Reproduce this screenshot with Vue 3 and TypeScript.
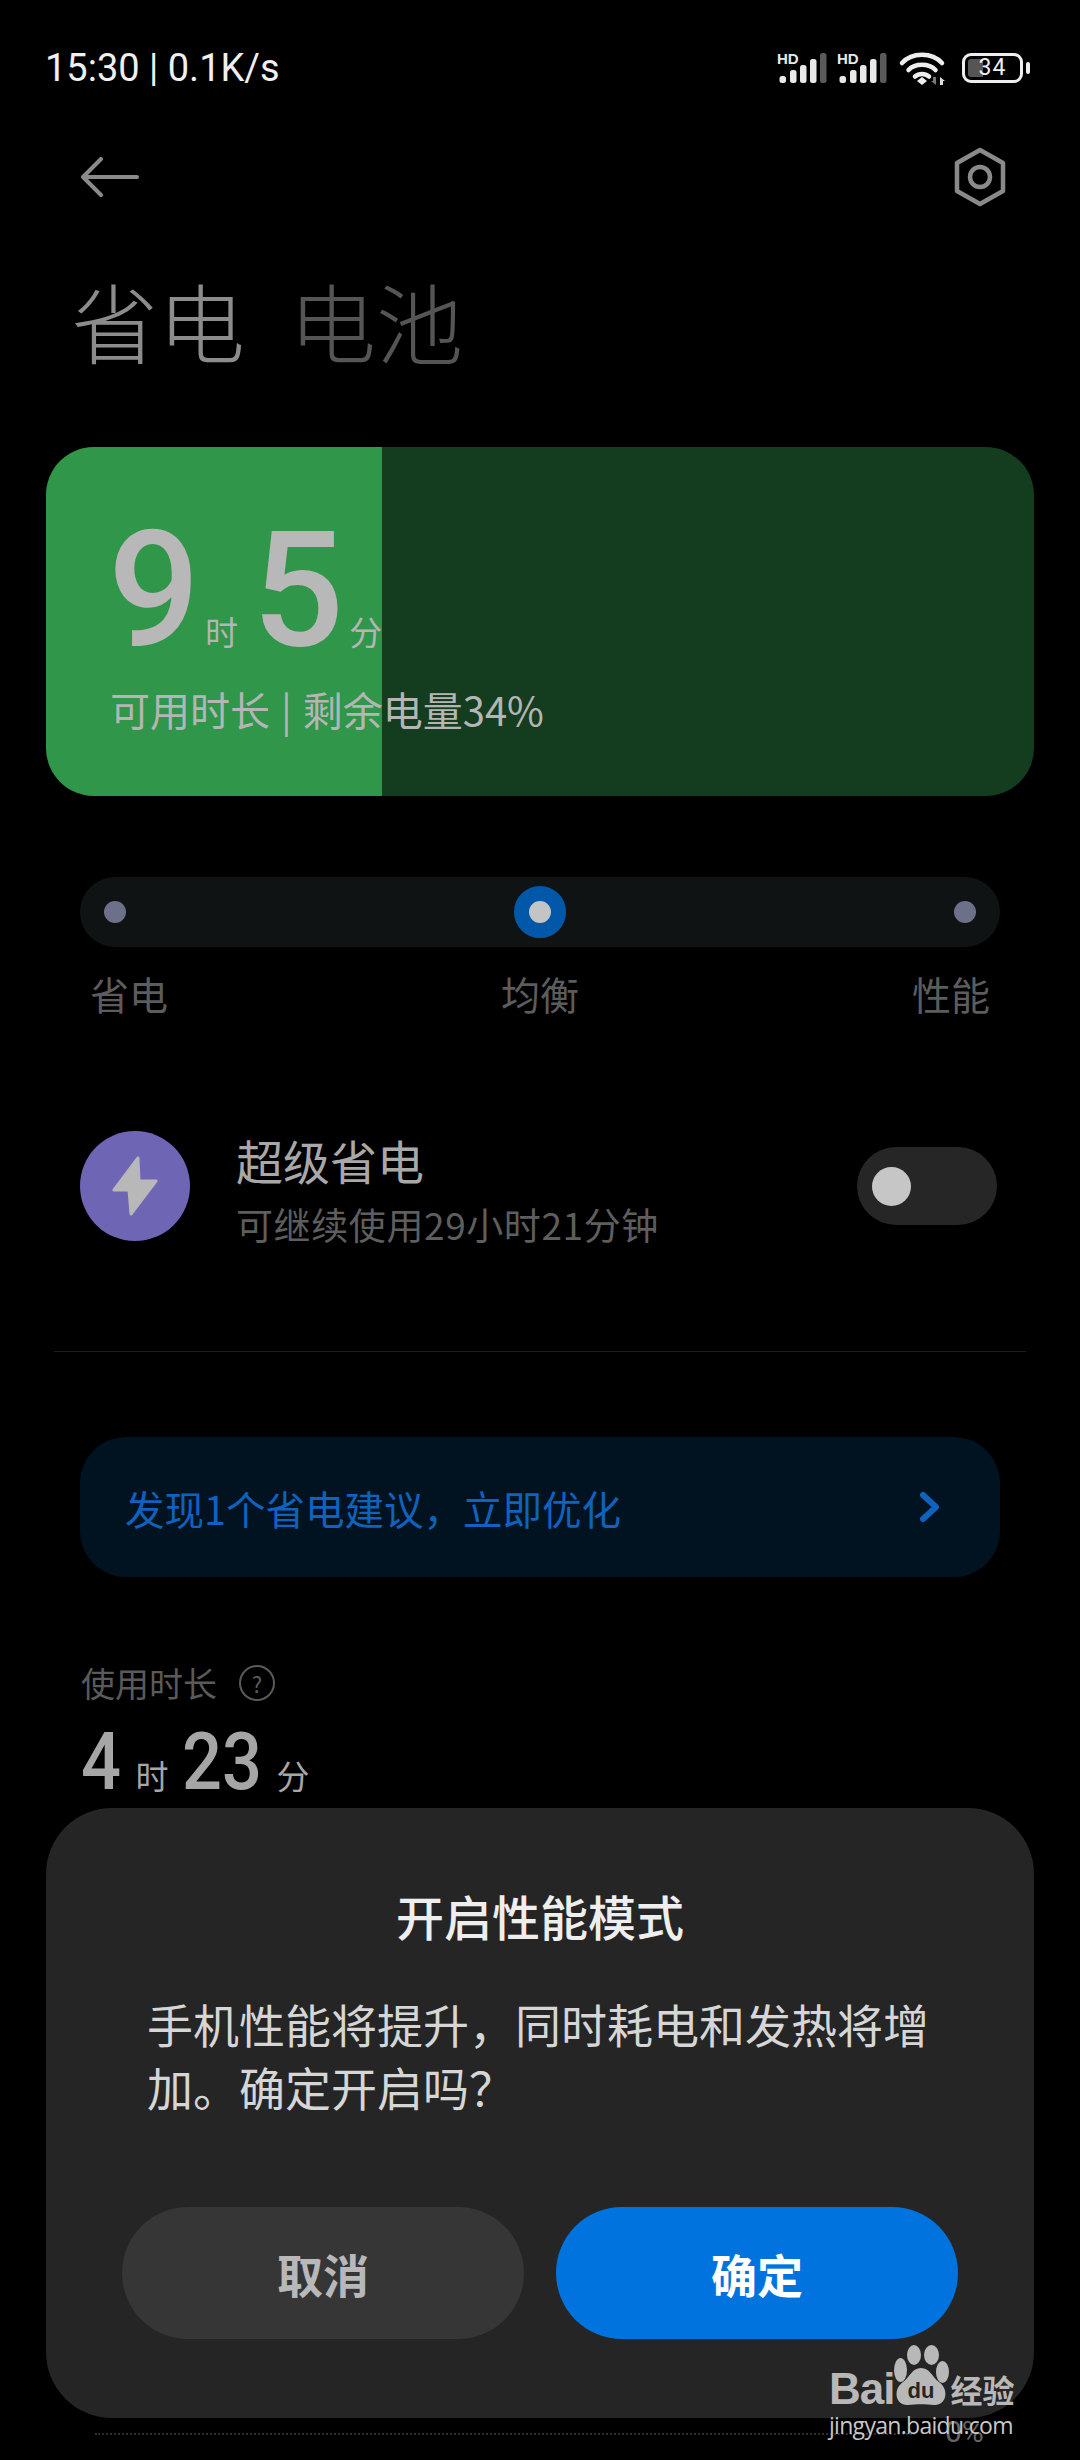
<script setup lang="ts">
interface ModeStop {
  label: string;
  active?: boolean;
}

const modes: ModeStop[] = [
  { label: '省电' },
  { label: '均衡', active: true },
  { label: '性能' }
];

const signalGroups = [0, 1];
const signalBars = [
  { x: 4.5, y: 26 },
  { x: 15, y: 20 },
  { x: 25, y: 15 },
  { x: 35, y: 9 }
];
</script>

<template>
  <div class="page">
    <div class="status-bar">
      <span class="status-text">15:30 | 0.1K/s</span>
      <div class="status-icons">
        <svg v-for="group in signalGroups" :key="group" class="signal" width="54" height="36" viewBox="0 0 54 36">
          <text x="2" y="14" class="hd">HD</text>
          <rect v-for="bar in signalBars" :key="bar.x" :x="bar.x" :y="bar.y" width="6.5" :height="33 - bar.y" rx="2.5" fill="#e8e8e8" />
          <rect x="45" y="3" width="6.5" height="30" rx="2.5" fill="#5a5a5a" />
        </svg>
        <svg class="wifi" width="50" height="36" viewBox="0 0 50 36" fill="none" stroke="#eee" stroke-width="4.5" stroke-linecap="round">
          <path d="M4 13C14 2 34 2 44 13" />
          <path d="M10.5 20C17 13 31 13 37.5 20" />
          <path d="M17 26.500C21 23 27 23 31 26.500" />
          <path d="M19 31L24 27L29 31L24 35Z" fill="#eee" stroke="none" />
          <path d="M35 27H38V35L33 31H35Z" fill="#777" stroke="none" />
          <path d="M42 27L47 31H45V35H42Z" fill="#ddd" stroke="none" />
        </svg>
        <div class="battery">
          <div class="battery-body">
            <span class="battery-fill"></span>
            <span class="battery-text">34</span>
          </div>
          <span class="battery-cap"></span>
        </div>
      </div>
    </div>

    <div class="nav-bar">
      <svg width="60" height="40" viewBox="0 0 60 40" fill="none" stroke="#8a8a8a" stroke-width="4" stroke-linecap="round" stroke-linejoin="round">
        <path d="M21 2L3 20L21 38" />
        <path d="M4 20H57" />
      </svg>
      <svg width="56" height="60" viewBox="0 0 56 60" fill="none" stroke="#8a8a8a" stroke-width="4.500" stroke-linejoin="round">
        <path d="M28 3L51 16V44L28 57L5 44V16Z" />
        <circle cx="28" cy="30" r="10" />
      </svg>
    </div>

    <div class="tabs">
      <span class="tab tab-active">省电</span>
      <span class="tab tab-muted">电池</span>
    </div>

    <section class="battery-card">
      <div class="battery-level"></div>
      <div class="card-content">
        <div class="remaining">
          <span class="big-num">9</span>
          <span class="big-unit">时</span>
          <span class="big-num big-num-second">5</span>
          <span class="big-unit">分</span>
        </div>
        <div class="remaining-label">可用时长 | 剩余电量34%</div>
      </div>
    </section>

    <section class="mode-picker">
      <div class="mode-track">
        <div v-for="mode in modes" :key="mode.label" class="mode-dot" :class="{ 'mode-dot-active': mode.active }"></div>
      </div>
      <div class="mode-labels">
        <span v-for="mode in modes" :key="mode.label">{{ mode.label }}</span>
      </div>
    </section>

    <section class="saver-row">
      <div class="saver-icon">
        <svg width="46" height="62" viewBox="0 0 46 62">
          <path d="M26 3L2 35H17L19 59L44 26H27Z" fill="#b8b8b8" stroke="#b8b8b8" stroke-width="3" stroke-linejoin="round" />
        </svg>
      </div>
      <div class="saver-text">
        <div class="saver-title">超级省电</div>
        <div class="saver-sub">可继续使用29小时21分钟</div>
      </div>
      <div class="switch"><span class="switch-knob"></span></div>
    </section>

    <div class="divider"></div>

    <div class="advice">
      <span>发现1个省电建议，立即优化</span>
      <svg width="22" height="32" viewBox="0 0 22 32" fill="none" stroke="#0f62bd" stroke-width="6" stroke-linecap="round" stroke-linejoin="round">
        <path d="M4 4L17 16L4 28" />
      </svg>
    </div>

    <section class="usage">
      <div class="usage-label">
        <span>使用时长</span>
        <span class="help">?</span>
      </div>
      <div class="usage-value">
        <span class="usage-num usage-num-one">4</span>
        <span class="usage-unit">时</span>
        <span class="usage-num usage-num-two">23</span>
        <span class="usage-unit">分</span>
      </div>
    </section>

    <!-- chart baseline that shows under the dialog -->
    <div class="chart-line"></div>
    <span class="chart-percent">0%</span>

    <div class="dialog">
      <h2 class="dialog-title">开启性能模式</h2>
      <p class="dialog-body">手机性能将提升，同时耗电和发热将增加。确定开启吗？</p>
      <div class="dialog-actions">
        <button class="btn btn-cancel" type="button">取消</button>
        <button class="btn btn-confirm" type="button">确定</button>
      </div>
    </div>

    <div class="watermark">
      <div class="wm-logo">
        <span class="wm-bai">Bai</span>
        <svg class="wm-paw" width="58" height="62" viewBox="0 0 58 62" fill="#b8b8b8">
          <ellipse cx="8.500" cy="26" rx="6.500" ry="12" />
          <ellipse cx="22" cy="11" rx="7" ry="10" />
          <ellipse cx="39.500" cy="11" rx="7.500" ry="10" />
          <ellipse cx="50.500" cy="28" rx="6.500" ry="11" />
          <path d="M29 24C38 24 40 33 47 38C58 46 54 62 42 61C34 60 24 60 16 61C4 62 0 46 11 38C18 33 20 24 29 24Z" />
          <text x="29" y="54" class="wm-du">du</text>
        </svg>
        <span class="wm-cn">经验</span>
      </div>
      <div class="wm-url">jingyan.baidu.com</div>
    </div>
  </div>
</template>

<style>
html,
body {
  margin: 0;
  background: #000;
}
</style>

<style scoped>
.page {
  position: relative;
  width: 1080px;
  height: 2460px;
  overflow: hidden;
  background: #000;
  font-family: "Noto Sans CJK SC", "Noto Sans", sans-serif;
  color: #b5b5b5;
}

/* Status bar */
.status-bar {
  display: flex;
  align-items: center;
  justify-content: space-between;
  height: 36px;
  padding: 50px 50px 0 45px;
}

.status-text {
  font-family: Roboto, "Noto Sans", sans-serif;
  font-size: 38px;
  font-weight: 400;
  color: #f0f0f0;
  white-space: nowrap;
}

.status-icons {
  display: flex;
  align-items: center;
  gap: 6px;
}

.signal {
  display: block;
}

.hd {
  font-family: "Liberation Sans", sans-serif;
  font-size: 15px;
  font-weight: 700;
  fill: #e8e8e8;
}

.wifi {
  margin: 0 8px 0 3px;
}

.battery {
  display: flex;
  align-items: center;
  gap: 3px;
}

.battery-body {
  position: relative;
  display: flex;
  align-items: center;
  justify-content: center;
  box-sizing: border-box;
  width: 61px;
  height: 30px;
  border: 3px solid #eee;
  border-radius: 9px;
}

.battery-fill {
  position: absolute;
  left: 3px;
  top: 3px;
  bottom: 3px;
  width: 15px;
  border-radius: 3px 0 0 3px;
  background: #555;
}

.battery-text {
  position: relative;
  font-family: Roboto, sans-serif;
  font-size: 23px;
  line-height: 24px;
  letter-spacing: 1px;
  color: #eee;
}

.battery-cap {
  width: 4px;
  height: 12px;
  border-radius: 2px;
  background: #eee;
}

/* Nav + title */
.nav-bar {
  display: flex;
  align-items: center;
  justify-content: space-between;
  height: 60px;
  padding: 61px 72px 0 80px;
}

.tabs {
  display: flex;
  gap: 44px;
  padding: 57px 0 0 71px;
  font-size: 87px;
  font-weight: 300;
  line-height: 112px;
}

.tab-active {
  color: #8c8c8c;
}

.tab-muted {
  color: #555;
}

/* Battery card */
.battery-card {
  position: relative;
  overflow: hidden;
  height: 349px;
  margin: 71px 46px 0;
  border-radius: 48px;
  background: #143c1e;
}

.battery-level {
  position: absolute;
  inset: 0 auto 0 0;
  width: 336px;
  background: #2f964a;
}

.card-content {
  position: relative;
  padding: 66px 0 0 62px;
}

.remaining {
  display: flex;
  align-items: baseline;
  height: 154px;
}

.big-num {
  font-family: Roboto, sans-serif;
  font-size: 162px;
  font-weight: 500;
  line-height: 154px;
  color: #b8b8b8;
}

.big-num-second {
  margin-left: 14px;
}

.big-unit {
  margin-left: 5px;
  font-size: 33px;
  color: #b5b5b5;
}

.remaining-label {
  margin: 16px 0 0 2px;
  font-size: 40px;
  line-height: 52px;
  word-spacing: 2px;
  color: #b5b5b5;
  white-space: nowrap;
}

/* Mode slider */
.mode-picker {
  margin: 81px 80px 0;
}

.mode-track {
  display: flex;
  align-items: center;
  justify-content: space-between;
  box-sizing: border-box;
  height: 70px;
  padding: 0 24px;
  border-radius: 35px;
  background: #101313;
}

.mode-dot {
  width: 22px;
  height: 22px;
  border-radius: 50%;
  background: #6d7089;
}

.mode-dot-active {
  box-sizing: border-box;
  width: 52px;
  height: 52px;
  border: 15px solid #0258a8;
  background: #c4c4c4;
}

.mode-labels {
  display: flex;
  justify-content: space-between;
  margin-top: 20px;
  padding: 0 10px;
  font-size: 39px;
  line-height: 52px;
  color: #5c5c5c;
}

/* Super saver row */
.saver-row {
  display: flex;
  align-items: center;
  margin: 105px 83px 0 80px;
}

.saver-icon {
  display: flex;
  align-items: center;
  justify-content: center;
  flex: none;
  width: 110px;
  height: 110px;
  border-radius: 50%;
  background: #6e66b4;
}

.saver-text {
  flex: 1;
  margin-left: 46px;
  padding-top: 6px;
}

.saver-title {
  font-size: 47px;
  line-height: 60px;
  color: #a8a8a8;
}

.saver-sub {
  margin-top: 10px;
  font-size: 37px;
  line-height: 48px;
  letter-spacing: 0.6px;
  color: #5e5e5e;
  white-space: nowrap;
}

.switch {
  display: flex;
  align-items: center;
  box-sizing: border-box;
  width: 140px;
  height: 78px;
  padding-left: 15px;
  border-radius: 39px;
  background: #262626;
}

.switch-knob {
  width: 39px;
  height: 39px;
  border-radius: 50%;
  background: #c6c6c6;
}

.divider {
  height: 1px;
  margin: 103px 54px 0;
  background: #1d1d1d;
}

/* Advice banner */
.advice {
  display: flex;
  align-items: center;
  justify-content: space-between;
  box-sizing: border-box;
  height: 140px;
  margin: 85px 80px 0;
  padding: 0 59px 0 45px;
  border-radius: 46px;
  background: #011321;
  font-size: 39.5px;
  color: #0f62bd;
}

/* Usage */
.usage {
  margin: 81px 0 0 81px;
}

.usage-label {
  display: flex;
  align-items: center;
  gap: 22px;
  font-size: 34px;
  line-height: 50px;
  color: #5a5a5a;
}

.help {
  display: flex;
  align-items: center;
  justify-content: center;
  box-sizing: border-box;
  width: 36px;
  height: 36px;
  border: 2px solid #5a5a5a;
  border-radius: 50%;
  font-size: 22px;
}

.usage-value {
  display: flex;
  align-items: baseline;
  gap: 14px;
  margin-top: 8px;
}

/* digits are narrower than Roboto in the reference */
.usage-num {
  display: inline-block;
  font-family: Roboto, sans-serif;
  font-size: 80px;
  font-weight: 500;
  line-height: 92px;
  color: #a6a6a6;
  transform: scaleX(0.88);
  transform-origin: left center;
}

.usage-num-one {
  margin-right: -5px;
}

.usage-num-two {
  margin-right: -11px;
}

.usage-unit {
  font-size: 33px;
  color: #a6a6a6;
}

.chart-line {
  position: absolute;
  left: 95px;
  top: 2433px;
  width: 820px;
  border-top: 2px dotted #2c2c2c;
}

.chart-percent {
  position: absolute;
  left: 945px;
  top: 2414px;
  font-family: Roboto, sans-serif;
  font-size: 30px;
  color: #666;
}

/* Dialog */
.dialog {
  position: absolute;
  left: 46px;
  top: 1808px;
  box-sizing: border-box;
  width: 988px;
  height: 610px;
  padding-top: 75px;
  border-radius: 66px;
  background: #252525;
}

.dialog-title {
  margin: 0;
  font-size: 48px;
  font-weight: 500;
  line-height: 64px;
  text-align: center;
  color: #eee;
}

.dialog-body {
  width: 790px;
  margin: 45px 0 0 101px;
  font-size: 46px;
  line-height: 63px;
  color: #d6d6d6;
}

.dialog-actions {
  display: flex;
  gap: 32px;
  margin: 89px 76px 0;
}

.btn {
  flex: 1;
  height: 132px;
  padding: 0;
  border: none;
  border-radius: 66px;
  font-family: inherit;
  font-size: 46px;
  font-weight: 700;
}

.btn-cancel {
  background: #363636;
  color: #b8b8b8;
}

.btn-confirm {
  background: #0073de;
  color: #fff;
}

/* Watermark */
.watermark {
  position: absolute;
  left: 829px;
  top: 2344px;
  width: 195px;
  color: #b8b8b8;
}

.wm-logo {
  display: flex;
  align-items: flex-end;
  height: 62px;
  font-family: "Liberation Sans", sans-serif;
  font-weight: 700;
}

.wm-bai {
  font-size: 44px;
  line-height: 34px;
  letter-spacing: -1px;
}

.wm-paw {
  flex: none;
  margin-left: -2px;
}

.wm-du {
  font-family: "Liberation Sans", sans-serif;
  font-size: 22px;
  font-weight: 700;
  text-anchor: middle;
  fill: #252525;
}

.wm-cn {
  font-family: "Noto Sans CJK SC", sans-serif;
  font-size: 32px;
  font-weight: 700;
  line-height: 34px;
  white-space: nowrap;
}

.wm-url {
  margin-top: 4px;
  font-family: "Open Sans", sans-serif;
  font-size: 23px;
  line-height: 30px;
  letter-spacing: -0.7px;
  white-space: nowrap;
  color: #c8c8c8;
}
</style>
